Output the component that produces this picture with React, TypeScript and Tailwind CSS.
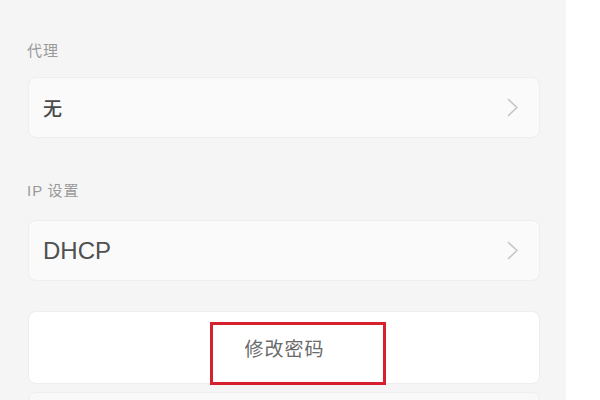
import React from "react";

const Chevron = () => (
  <svg width="12" height="19" viewBox="0 0 12 19" fill="none">
    <polyline points="1.5,1.5 10,9.5 1.5,17.5" stroke="#c6c6c6" strokeWidth="1.6" strokeLinecap="round" strokeLinejoin="round" />
  </svg>
);

const Row = ({ value, big }: { value: string; big?: boolean }) => (
  <div className="flex h-[61px] shrink-0 items-center justify-between rounded-[8px] border border-[#eeeeee] bg-[#fafafa] pl-[14px] pr-[20px]">
    <span
      className={
        big
          ? "text-[24px] leading-none text-[#505050] [font-family:'Liberation_Sans','Noto_Sans_CJK_SC',sans-serif]"
          : "text-[19px] leading-none text-[#4a4a4a] font-medium [font-family:'Noto_Sans_CJK_SC',sans-serif]"
      }
    >
      {value}
    </span>
    <Chevron />
  </div>
);

export default function App() {
  return (
    <div className="flex h-[400px] w-[600px] overflow-hidden bg-white [font-family:'Noto_Sans_CJK_SC',sans-serif]">
      <div className="flex w-[566px] shrink-0 flex-col bg-[#f5f5f5] pl-[27px] pr-[26px] pt-[41px]">
        <div className="shrink-0 text-[15px] leading-[18px] tracking-[1px] text-[#9a9a9a]">代理</div>
        <div className="mt-[18px] shrink-0 pl-[1px]">
          <Row value="无" />
        </div>
        <div className="mt-[43px] shrink-0 text-[15px] leading-[18px] tracking-[1px] text-[#9a9a9a]">
          <span className="[font-family:'Liberation_Sans',sans-serif]">IP</span> 设置
        </div>
        <div className="mt-[20px] shrink-0 pl-[1px]">
          <Row value="DHCP" big />
        </div>
        <div className="relative ml-[1px] mt-[30px] flex h-[73px] shrink-0 items-center justify-center rounded-[8px] border border-[#eeeeee] bg-white">
          <span className="pl-[1px] text-[19px] leading-none tracking-[1px] text-[#6a6a6a]">修改密码</span>
          <div className="absolute left-[181px] top-[10px] h-[63px] w-[176px] border-[3px] border-[#d5202e]" />
        </div>
        <div className="ml-[1px] mt-[8px] h-[40px] shrink-0 rounded-[8px] border border-[#eeeeee] bg-[#f9f9f9]" />
      </div>
      <div className="flex-1 bg-white" />
    </div>
  );
}
